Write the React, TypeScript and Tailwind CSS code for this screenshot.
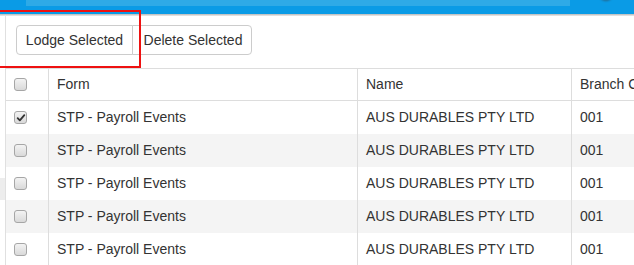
import React from "react";

function Checkbox({ checked }: { checked?: boolean }) {
  return (
    <span className="flex h-[13px] w-[13px] items-center justify-center rounded-[3px] border border-[#a6a6a6] bg-gradient-to-b from-[#f3f3f3] to-[#d9d9d9]">
      {checked && (
        <svg viewBox="0 0 12 12" className="h-[10px] w-[10px]">
          <path d="M2 6.2 L4.6 8.8 L10 2.6" stroke="#333" strokeWidth="2.2" fill="none" strokeLinecap="round" strokeLinejoin="round" />
        </svg>
      )}
    </span>
  );
}

const rows = [0, 1, 2, 3, 4];

export default function App() {
  return (
    <div className="relative h-[265px] w-[634px] overflow-hidden bg-white font-['Liberation_Sans',Arial,sans-serif] text-[14px] text-[#333]">
      <div className="h-[14px] bg-[#0a9be6]">
        <div className="ml-[26px] h-[6px] w-[544px] bg-[#2eaae7]" />
      </div>
      <div className="h-[2px] bg-gradient-to-b from-[#b8b8b8] to-[#ececec]" />
      <div className="flex">
        <div className="flex w-[5px] flex-col">
          <div className="h-[162px]" />
          <div className="h-[22px] bg-[#ededed]" />
        </div>
        <div className="min-w-0 flex-1 border-l border-[#e0e0e0]">
          <div className="pl-[10px] pt-[9px]">
            <div className="inline-flex">
              <button className="h-[30px] w-[117px] rounded-l-[4px] border border-[#cccccc] bg-white text-[14px] text-[#333]">
                Lodge Selected
              </button>
              <button className="-ml-px h-[30px] w-[120px] rounded-r-[4px] border border-[#cccccc] bg-white pl-[2px] text-[14px] text-[#333]">
                Delete Selected
              </button>
            </div>
          </div>
          <div className="mt-[13px] w-[700px]">
            <div className="grid h-[33px] grid-cols-[42px_309px_214px_135px] border-y border-[#dddddd]">
              <div className="flex items-center pl-[8px]">
                <Checkbox />
              </div>
              <div className="flex items-center border-l border-[#dddddd] pl-[8px]">Form</div>
              <div className="flex items-center border-l border-[#dddddd] pl-[8px]">Name</div>
              <div className="flex items-center whitespace-nowrap border-l border-[#dddddd] pl-[8px]">Branch Code</div>
            </div>
            {rows.map((i) => (
              <div
                key={i}
                className={`grid h-[33px] grid-cols-[42px_309px_214px_135px] ${i % 2 === 1 ? "bg-[#f4f4f4]" : "bg-white"}`}
              >
                <div className="flex items-center pl-[8px]">
                  <Checkbox checked={i === 0} />
                </div>
                <div className="flex items-center border-l border-[#dddddd] pl-[8px]">STP - Payroll Events</div>
                <div className="flex items-center border-l border-[#dddddd] pl-[8px]">AUS DURABLES PTY LTD</div>
                <div className="flex items-center border-l border-[#dddddd] pl-[8px]">001</div>
              </div>
            ))}
          </div>
        </div>
      </div>
      <div className="absolute left-[-10px] top-[10px] h-[58px] w-[151px] border-2 border-[#ee1111]" />
      <div className="absolute left-[599px] top-[-13px] h-[14px] w-[14px] rounded-full bg-[#2f4f63] opacity-70 blur-[1px]" />
    </div>
  );
}
